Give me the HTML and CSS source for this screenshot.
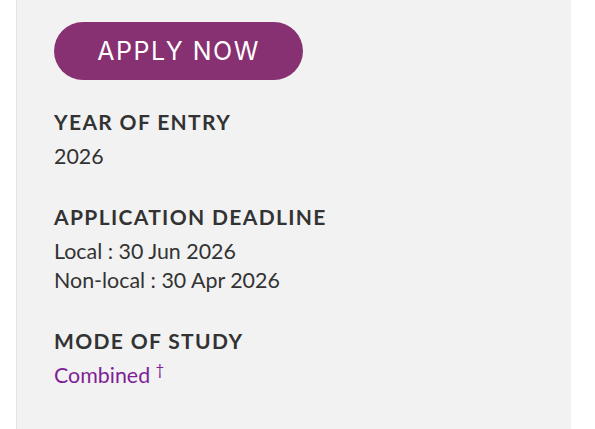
FILE: index.html
```html
<!DOCTYPE html>
<html lang="en">
<head>
<meta charset="utf-8">
<title>Apply</title>
<link rel="stylesheet" href="styles.css">
</head>
<body>
<aside class="panel">
  <a class="apply-btn" href="#">APPLY NOW</a>
  <section class="info">
    <h3 class="info-title">YEAR OF ENTRY</h3>
    <p class="info-text">2026</p>
  </section>
  <section class="info">
    <h3 class="info-title">APPLICATION DEADLINE</h3>
    <p class="info-text">Local : 30 Jun 2026</p>
    <p class="info-text">Non-local : 30 Apr 2026</p>
  </section>
  <section class="info">
    <h3 class="info-title">MODE OF STUDY</h3>
    <p class="info-text"><a class="mode-link" href="#">Combined</a> <sup class="dagger">†</sup></p>
  </section>
</aside>
</body>
</html>
```

FILE: styles.css
```css
html, body {
  margin: 0;
  padding: 0;
  background: #ffffff;
  height: 100%;
}
body {
  font-family: Lato, "Liberation Sans", sans-serif;
  color: #333333;
}
.panel {
  box-sizing: border-box;
  margin-left: 16px;
  width: 555px;
  min-height: 100%;
  background: #f2f2f2;
  border-left: 1px solid #e4e4e4;
  padding: 22px 0 0 37px;
}
.apply-btn {
  display: flex;
  align-items: center;
  justify-content: center;
  width: 249px;
  height: 58px;
  border-radius: 29px;
  background: #873172;
  color: #ffffff;
  text-decoration: none;
  font-family: Inter, "Open Sans", sans-serif;
  font-size: 25px;
  font-weight: 400;
  letter-spacing: 1.5px;
  margin-bottom: 30px;
}
.info {
  margin-bottom: 34px;
}
.info-title {
  margin: 0 0 8px;
  font-size: 21px;
  font-weight: 700;
  letter-spacing: 1.35px;
  line-height: 24px;
  color: #333333;
}
.info-text {
  margin: 0;
  font-size: 21.4px;
  line-height: 29px;
  color: #333333;
}
.mode-link {
  color: #7f1f97;
  text-decoration: none;
}
.dagger {
  color: #7f1f97;
  font-size: 15px;
  line-height: 0;
}
```
